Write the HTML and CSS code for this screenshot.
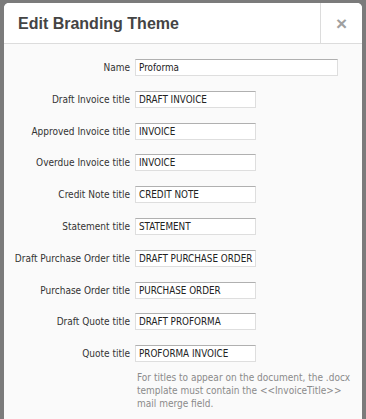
FILE: index.html
```html
<!DOCTYPE html>
<html lang="en">
<head>
  <meta charset="UTF-8">
  <title>Edit Branding Theme</title>
  <link rel="stylesheet" href="styles.css">
</head>
<body>

  <div class="modal">
    <div class="modal-header">
      <h2>Edit Branding Theme</h2>
      <button class="close" title="Close">&times;</button>
    </div>

    <div class="modal-body">
      <form class="theme-form">
        <label for="name">Name</label>
        <input type="text" id="name" class="wide" value="Proforma" />

        <label for="draftInvoice">Draft Invoice title</label>
        <input type="text" id="draftInvoice" value="DRAFT INVOICE" />

        <label for="approvedInvoice">Approved Invoice title</label>
        <input type="text" id="approvedInvoice" value="INVOICE" />

        <label for="overdueInvoice">Overdue Invoice title</label>
        <input type="text" id="overdueInvoice" value="INVOICE" />

        <label for="creditNote">Credit Note title</label>
        <input type="text" id="creditNote" value="CREDIT NOTE" />

        <label for="statement">Statement title</label>
        <input type="text" id="statement" value="STATEMENT" />

        <label for="draftPO">Draft Purchase Order title</label>
        <input type="text" id="draftPO" value="DRAFT PURCHASE ORDER" />

        <label for="po">Purchase Order title</label>
        <input type="text" id="po" value="PURCHASE ORDER" />

        <label for="draftQuote">Draft Quote title</label>
        <input type="text" id="draftQuote" value="DRAFT PROFORMA" />

        <label for="quote">Quote title</label>
        <input type="text" id="quote" value="PROFORMA INVOICE" />

        <p class="help">For titles to appear on the document, the .docx<br>template must contain the &lt;&lt;InvoiceTitle&gt;&gt;<br>mail merge field.</p>
      </form>
    </div>
  </div>

</body>
</html>
```

FILE: styles.css
```css
body {
  margin: 0;
  background: #7b7b7b;
  font-family: "Liberation Sans", Arial, sans-serif;
  overflow: hidden;
}
.modal {
  margin: 3px 4px 0;
  height: 420px;
  background: #fafafa;
  border-radius: 5px 5px 0 0;
  overflow: hidden;
}
.modal-header {
  display: flex;
  height: 40px;
  background: white;
  border-bottom: 1px solid #dcdcdc;
}
.modal-header h2 {
  flex: 1;
  margin: 0;
  padding: 1px 0 0 14px;
  font-size: 16px;
  line-height: 40px;
  color: #444;
}
.close {
  width: 42px;
  border: none;
  border-left: 1px solid #dcdcdc;
  background: none;
  color: #a0a0a0;
  font-family: "Liberation Sans", Arial, sans-serif;
  font-size: 19px;
  font-weight: bold;
  padding: 1px 0 0;
  cursor: pointer;
}
.modal-body {
  padding-top: 15px;
}
.theme-form {
  display: grid;
  grid-template-columns: 126px auto;
  column-gap: 5px;
  row-gap: 14.8px;
  align-items: center;
  font-family: "DejaVu Sans Condensed", Tahoma, sans-serif;
  font-size: 10px;
}
.theme-form label {
  text-align: right;
  color: #333;
}
.theme-form input {
  box-sizing: border-box;
  width: 121px;
  height: 17px;
  margin: 0;
  padding: 0 0 0 3px;
  border: 1px solid #dedede;
  border-top-color: #b0b0b0;
  background: white;
  color: #222;
  font-family: inherit;
  font-size: 9.8px;
}
.theme-form input.wide {
  width: 203px;
}
.help {
  grid-column: 2;
  margin: -6px 0 0;
  padding-left: 2px;
  color: #8a8a8a;
  line-height: 13px;
  white-space: nowrap;
}
```
